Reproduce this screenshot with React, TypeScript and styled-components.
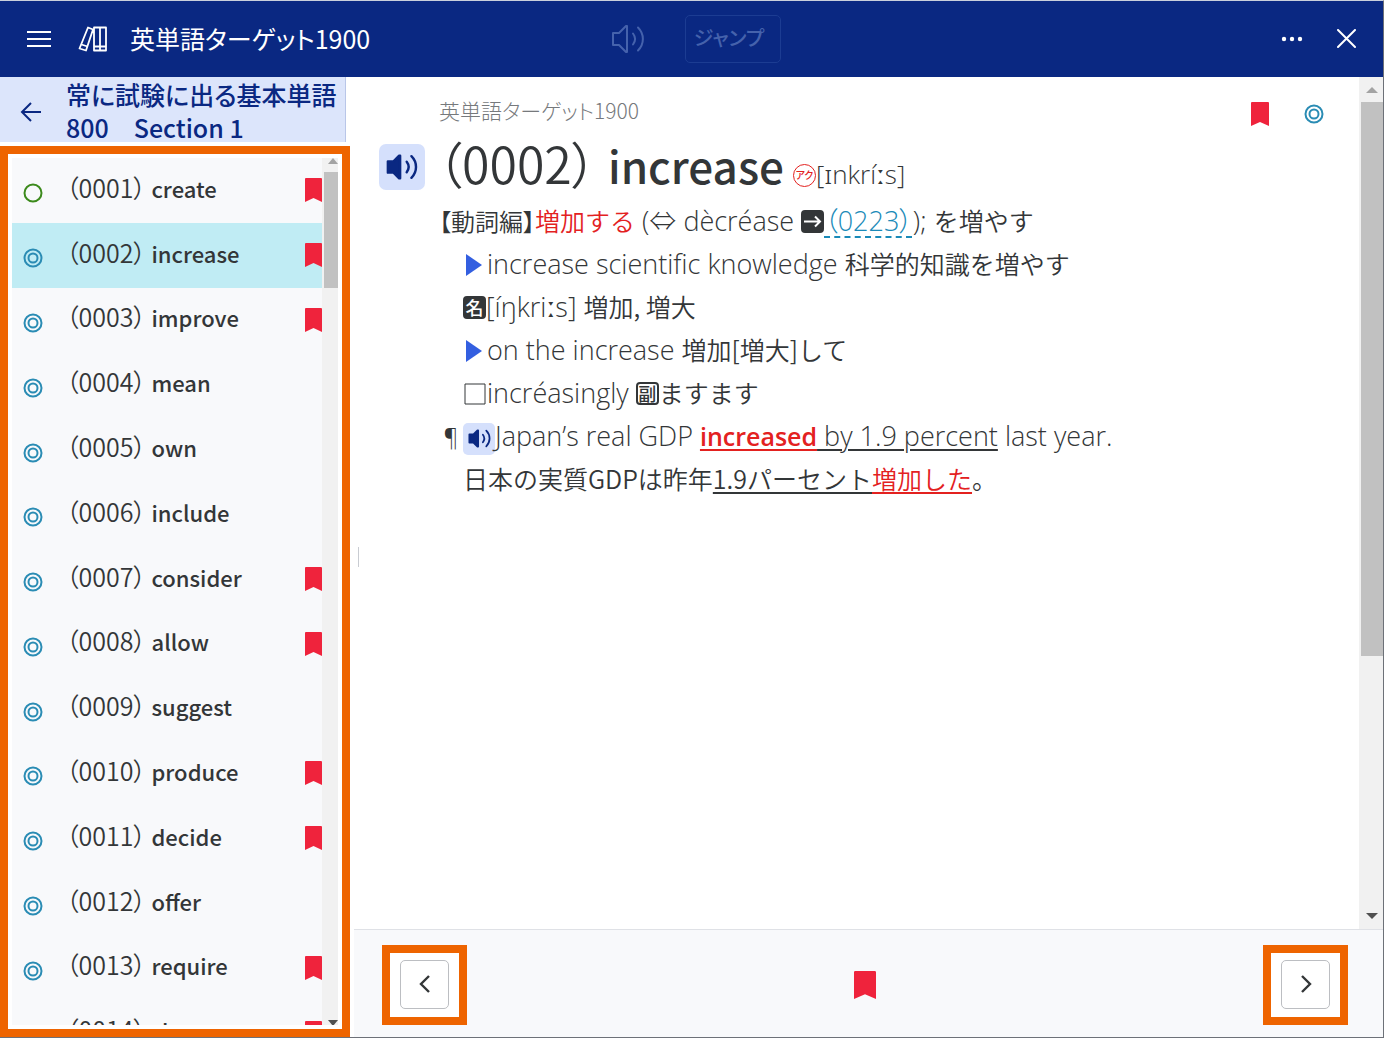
import React from "react";
import styled, { createGlobalStyle, css } from "styled-components";

const navy = "#0a2882";
const ink = "#333638";
const red = "#e3211f";
const orange = "#ee6400";
const bookmarkRed = "#ef233c";
const teal = "#2a8cb4";

const GlobalStyle = createGlobalStyle`
  *, *::before, *::after { box-sizing: border-box; }
  body {
    margin: 0;
    color: ${ink};
    background: #fff;
    font-family: "Noto Sans CJK JP", "Noto Sans", sans-serif;
    font-feature-settings: "palt";
  }
  button { font: inherit; color: inherit; padding: 0; border: 0; background: none; cursor: pointer; }
  svg { display: block; flex: none; }
`;

const Window = styled.div`
  display: flex;
  flex-direction: column;
  height: 100vh;
  border: 1px solid #6d7178;
  border-top-color: #c9cfdc;
  border-left: 0;
  overflow: hidden;
`;

const TopBar = styled.header`
  display: grid;
  grid-template-columns: 1fr auto 1fr;
  align-items: center;
  flex: none;
  height: 76px;
  padding: 0 27px 0 26px;
  color: #fff;
  background: ${navy};
`;

const BarGroup = styled.div<{ $gap: number; $end?: boolean }>`
  display: flex;
  align-items: center;
  gap: ${(p) => p.$gap}px;
  justify-content: ${(p) => (p.$end ? "flex-end" : "flex-start")};
`;

const BarTools = styled(BarGroup)`
  padding-left: 10px;
`;

const AppTitle = styled.h1`
  margin: 0 0 0 -4px;
  padding-bottom: 2px;
  font-size: 25px;
  line-height: 36px;
  font-weight: 400;
  white-space: nowrap;
`;

const JumpButton = styled.button`
  width: 96px;
  height: 48px;
  padding: 0 8px 4px 0;
  font-size: 20px;
  font-weight: 500;
  color: #4562ac;
  border: 1px solid #1c3c92;
  border-radius: 5px;
`;

const Body = styled.div`
  display: flex;
  flex: 1;
  min-height: 0;
`;

const Sidebar = styled.aside`
  display: flex;
  flex-direction: column;
  flex: none;
  width: 350px;
`;

const SectionHead = styled.div`
  display: flex;
  align-items: center;
  gap: 24px;
  height: 65px;
  margin-right: 4px;
  padding: 2px 0 0 20px;
  color: ${navy};
  background: #dce5fb;
  border-right: 1px solid #b9c6e8;
`;

const BackButton = styled.button`
  padding-top: 2px;
`;

const SectionTitle = styled.h2`
  margin: 0;
  font-size: 25px;
  line-height: 33px;
  font-weight: 500;
  white-space: nowrap;
`;

const ListFrame = styled.div`
  display: flex;
  flex: 1;
  min-height: 0;
  margin-top: 4px;
  padding: 4px;
  border: 8px solid ${orange};
`;

const WordList = styled.ul`
  display: grid;
  grid-auto-rows: 1fr;
  flex: 1;
  height: 907px;
  margin: 0;
  padding: 0;
  list-style: none;
`;

const ListClip = styled.div`
  display: flex;
  align-items: flex-start;
  flex: 1;
  overflow: hidden;
  background: #f8f9fb;
`;

const WordRow = styled.button<{ $active: boolean }>`
  display: flex;
  align-items: center;
  width: 100%;
  height: 100%;
  padding-left: 11px;
  text-align: left;
  font-size: 25px;
  line-height: 36px;
  background: ${(p) => (p.$active ? "#c0ecf4" : "transparent")};
`;

const RowMark = styled.span`
  padding-top: 6px;
`;

const RowText = styled.span`
  flex: 1;
  padding: 0 0 6px 23px;
  white-space: pre;
`;

const Number = styled.span`
  font-weight: 350;
`;

const Word = styled.span<{ $size: number }>`
  font-size: ${(p) => p.$size}px;
  font-weight: 500;
`;

const ScrollTrack = styled.div<{ $wide?: boolean }>`
  display: flex;
  flex-direction: column;
  flex: none;
  align-self: stretch;
  width: ${(p) => (p.$wide ? 24 : 16)}px;
  padding-left: 2px;
  background: #f1f1f1;
`;

const ScrollThumb = styled.div<{ $share: number }>`
  flex: ${(p) => p.$share} 0 0;
  background: #c1c1c1;
`;

const ScrollRest = styled.div<{ $share: number }>`
  flex: ${(p) => p.$share} 0 0;
`;

const ScrollArrow = styled.div<{ $height: number; $corner?: boolean }>`
  display: flex;
  justify-content: ${(p) => (p.$corner ? "flex-end" : "center")};
  align-items: ${(p) => (p.$corner ? "flex-start" : "center")};
  flex: none;
  height: ${(p) => p.$height}px;
`;

const Reader = styled.main`
  display: flex;
  flex-direction: column;
  flex: 1;
  min-width: 0;
`;

const ReaderArea = styled.div`
  display: flex;
  flex: 1;
  min-height: 0;
`;

const Splitter = styled.div`
  align-self: center;
  width: 1px;
  height: 20px;
  margin: 108px 0 0 8px;
  background: #c9ccd2;
`;

const Article = styled.article`
  flex: 1;
  min-width: 0;
  padding: 16px 35px 0 20px;
`;

const SourceRow = styled.div`
  display: flex;
  justify-content: space-between;
  align-items: center;
  height: 42px;
  padding-left: 60px;
`;

const Source = styled.span`
  padding-bottom: 8px;
  font-size: 21px;
  line-height: 30px;
  font-weight: 300;
  color: #76797c;
`;

const Headword = styled.div`
  display: flex;
  align-items: center;
  gap: 12px;
  height: 64px;
`;

const AudioButton = styled.button<{ $small?: boolean }>`
  display: inline-flex;
  align-items: center;
  justify-content: center;
  flex: none;
  color: ${navy};
  background: #d5e0fc;
  ${(p) =>
    p.$small
      ? css`
          width: 32px;
          height: 32px;
          border-radius: 5px;
          vertical-align: middle;
        `
      : css`
          width: 46px;
          height: 46px;
          border-radius: 7px;
        `}
`;

const HeadText = styled.h2`
  margin: 0;
  padding-top: 2px;
  font-size: 50px;
  line-height: 60px;
  font-weight: 400;
  white-space: nowrap;
`;

const Pronunciation = styled.span`
  font-family: "Open Sans", "Noto Sans", sans-serif;
  font-size: 26px;
  font-weight: 300;
`;

const AccentBadge = styled.span`
  display: inline-flex;
  align-items: center;
  justify-content: center;
  width: 23px;
  height: 23px;
  margin-left: 9px;
  font-size: 10px;
  line-height: 20px;
  font-weight: 500;
  vertical-align: 5px;
  color: ${red};
  border: 1px solid ${red};
  border-radius: 50%;
`;

const Line = styled.p<{ $level: number }>`
  margin: 0;
  padding-left: ${(p) => 60 + p.$level * 24}px;
  font-family: "Open Sans", "Noto Sans CJK JP", "Noto Sans", sans-serif;
  font-size: 27px;
  line-height: 43px;
  height: 43px;
  font-weight: 300;
  white-space: nowrap;
`;

const Pilcrow = styled.span`
  display: inline-block;
  width: 24px;
  padding-left: 4px;
  font-size: 24px;
`;

const Jp = styled.span<{ $red?: boolean; $tight?: boolean }>`
  color: ${(p) => (p.$red ? red : "inherit")};
  font-family: "Noto Sans CJK JP", sans-serif;
  font-size: ${(p) => (p.$tight ? 24 : 25)}px;
  font-weight: 350;
  font-feature-settings: ${(p) => (p.$tight ? '"palt"' : "normal")};
`;

const Underlined = styled.span`
  text-decoration: underline;
  text-decoration-thickness: 2px;
  text-underline-offset: 3px;
`;

const Key = styled.strong`
  color: ${red};
  font-size: 25px;
  font-weight: 600;
  text-decoration: underline;
  text-decoration-thickness: 2px;
  text-underline-offset: 3px;
`;

const RedUnder = styled(Underlined)`
  color: ${red};
`;

const CrossRef = styled.a`
  color: #1a8ab8;
  text-decoration: underline dashed 2px;
  text-underline-offset: 5px;
`;

const Tag = styled.span<{ $outline?: boolean }>`
  display: inline-block;
  overflow: hidden;
  width: 23px;
  height: 23px;
  font-family: "Noto Sans CJK JP", sans-serif;
  font-size: 18px;
  line-height: 19px;
  font-weight: 500;
  text-align: center;
  vertical-align: -2px;
  border: 2px solid ${ink};
  border-radius: 4px;
  color: ${(p) => (p.$outline ? ink : "#fff")};
  background: ${(p) => (p.$outline ? "#fff" : ink)};
`;

const Bullet = styled.svg`
  display: inline-block;
  width: 24px;
  height: 24px;
  vertical-align: -3px;
`;

const BottomBar = styled.footer`
  display: flex;
  align-items: center;
  justify-content: space-between;
  flex: none;
  height: 108px;
  margin-left: 4px;
  padding: 2px 35px 0 28px;
  background: #f8f9fb;
  border-top: 1px solid #dfe1e6;
`;

const PagerFrame = styled.div`
  padding: 7px 10px 8px;
  background: #fff;
  border: 8px solid ${orange};
`;

const PagerButton = styled.button`
  display: flex;
  align-items: center;
  justify-content: center;
  width: 49px;
  height: 49px;
  background: #fff;
  border: 1px solid #bcbec2;
  border-radius: 5px;
`;

function Bookmark({ width = 18, height = 24 }: { width?: number; height?: number }) {
  return (
    <svg width={width} height={height} viewBox="0 0 18 24" preserveAspectRatio="none">
      <path d="M1 0h16a1 1 0 0 1 1 1v23l-9-4L0 24V1a1 1 0 0 1 1-1Z" fill={bookmarkRed} />
    </svg>
  );
}

function Mark({ single }: { single?: boolean }) {
  return (
    <svg width="20" height="20" viewBox="0 0 20 20" fill="none" strokeWidth="2">
      <circle cx="10" cy="10" r="8.5" stroke={single ? "#3c8a1c" : teal} />
      {!single && <circle cx="10" cy="10" r="4.5" stroke={teal} />}
    </svg>
  );
}

function Speaker({ size, filled, color }: { size: number; filled?: boolean; color: string }) {
  return (
    <svg width={size} height={size} viewBox="0 0 34 34" fill="none" stroke={color} strokeWidth={filled ? 2.6 : 2} strokeLinecap="round" strokeLinejoin="round">
      <path d={filled ? "M2 11h6l6-6h1v24h-1l-6-6H2Z" : "M2 11h6l7-7h1v26h-1l-7-7H2Z"} fill={filled ? color : "none"} />
      <path d="M22 11.5c2.6 3.4 2.6 7.6 0 11M27 5.5c6.5 6.5 6.5 16.5 0 23" />
    </svg>
  );
}

function Arrow({ up, size }: { up?: boolean; size: number }) {
  return (
    <svg width={size} height="6" viewBox="0 0 12 6" preserveAspectRatio="none">
      <path d={up ? "M0 6 6 0l6 6Z" : "M0 0h12L6 6Z"} fill={up ? "#a3a3a3" : "#505050"} />
    </svg>
  );
}

function Triangle() {
  return (
    <Bullet viewBox="0 0 24 24">
      <path d="M3 1v22l16-11Z" fill="#335fe0" />
    </Bullet>
  );
}

const words: { word: string; saved: boolean; single?: boolean }[] = [
  { word: "create", saved: true, single: true },
  { word: "increase", saved: true },
  { word: "improve", saved: true },
  { word: "mean", saved: false },
  { word: "own", saved: false },
  { word: "include", saved: false },
  { word: "consider", saved: true },
  { word: "allow", saved: true },
  { word: "suggest", saved: false },
  { word: "produce", saved: true },
  { word: "decide", saved: true },
  { word: "offer", saved: false },
  { word: "require", saved: true },
  { word: "share", saved: true },
];

export default function App() {
  return (
    <Window>
      <GlobalStyle />
      <TopBar>
        <BarGroup $gap={27}>
          <button aria-label="メニュー">
            <svg width="25" height="20" viewBox="0 0 25 20" stroke="#fff" strokeWidth="2">
              <path d="M1 3h24M1 10h24M1 17h24" />
            </svg>
          </button>
          <svg width="29" height="26" viewBox="0 0 29 26" fill="none" stroke="#fff" strokeWidth="1.8" strokeLinejoin="round">
            <path d="M10 1.5 15 3.5 8 24.5 1.5 22.5Z M3.5 18.5l6 2M16 1.5h12v23H16ZM22 1.5v23M16 20.5h12" />
          </svg>
          <AppTitle>英単語ターゲット1900</AppTitle>
        </BarGroup>
        <BarTools $gap={40}>
          <button aria-label="音声" disabled>
            <Speaker size={34} color="#4562ac" />
          </button>
          <JumpButton disabled>ジャンプ</JumpButton>
        </BarTools>
        <BarGroup $gap={34} $end>
          <button aria-label="その他">
            <svg width="22" height="6" viewBox="0 0 22 6" fill="#fff">
              <circle cx="3" cy="3" r="2.2" />
              <circle cx="11" cy="3" r="2.2" />
              <circle cx="19" cy="3" r="2.2" />
            </svg>
          </button>
          <button aria-label="閉じる">
            <svg width="19" height="21" viewBox="0 0 19 21" stroke="#fff" strokeWidth="2" strokeLinecap="round">
              <path d="m1 1 17 17M18 1 1 18" />
            </svg>
          </button>
        </BarGroup>
      </TopBar>
      <Body>
        <Sidebar>
          <SectionHead>
            <BackButton aria-label="戻る">
              <svg width="22" height="20" viewBox="0 0 22 20" fill="none" stroke={navy} strokeWidth="2">
                <path d="M21 10H2M11 1 2 10l9 9" />
              </svg>
            </BackButton>
            <SectionTitle>
              常に試験に出る基本単語
              <br />
              800　Section 1
            </SectionTitle>
          </SectionHead>
          <ListFrame>
            <ListClip>
              <WordList>
                {words.map((w, i) => (
                  <li key={w.word}>
                    <WordRow $active={i === 1}>
                      <RowMark>
                        <Mark single={w.single} />
                      </RowMark>
                      <RowText>
                        <Number>（{String(i + 1).padStart(4, "0")}） </Number>
                        <Word $size={22}>{w.word}</Word>
                      </RowText>
                      {w.saved && <Bookmark width={17} />}
                    </WordRow>
                  </li>
                ))}
              </WordList>
              <ScrollTrack>
                <ScrollArrow $height={14} $corner>
                  <Arrow up size={10} />
                </ScrollArrow>
                <ScrollThumb $share={116} />
                <ScrollRest $share={733} />
                <ScrollArrow $height={5} $corner>
                  <Arrow size={10} />
                </ScrollArrow>
              </ScrollTrack>
            </ListClip>
          </ListFrame>
        </Sidebar>
        <Reader>
          <ReaderArea>
            <Splitter />
            <Article>
              <SourceRow>
                <Source>英単語ターゲット1900</Source>
                <BarGroup $gap={35}>
                  <Bookmark />
                  <Mark />
                </BarGroup>
              </SourceRow>
              <Headword>
                <AudioButton aria-label="発音を聞く">
                  <Speaker size={32} filled color={navy} />
                </AudioButton>
                <HeadText>
                  <Number>（0002） </Number>
                  <Word $size={44}>increase</Word>
                  <AccentBadge>アク</AccentBadge>
                  <Pronunciation>[ɪnkríːs]</Pronunciation>
                </HeadText>
              </Headword>
              <div>
                <Line $level={0}>
                  <Jp $tight>【動詞編】</Jp>
                  <Jp $red>増加する</Jp> (⇔ dècréase{" "}
                  <Tag>
                    <svg width="19" height="19" viewBox="0 0 19 19" fill="none" stroke="#fff" strokeWidth="2">
                      <path d="M1 9.5h16M12 4.5l5 5-5 5" />
                    </svg>
                  </Tag>
                  <CrossRef href="#0223">（0223）</CrossRef>); <Jp>を増やす</Jp>
                </Line>
                <Line $level={1}>
                  <Triangle />
                  increase scientific knowledge <Jp>科学的知識を増やす</Jp>
                </Line>
                <Line $level={1}>
                  <Tag>名</Tag>[íŋkriːs] <Jp>増加, 増大</Jp>
                </Line>
                <Line $level={1}>
                  <Triangle />
                  on the increase <Jp>増加[増大]して</Jp>
                </Line>
                <Line $level={1}>
                  <Bullet viewBox="0 0 24 24">
                    <path d="M2 2h20v20H2Z" fill="none" stroke={ink} />
                  </Bullet>
                  incréasingly <Tag $outline>副</Tag>
                  <Jp>ますます</Jp>
                </Line>
                <Line $level={0}>
                  <Pilcrow>¶</Pilcrow>
                  <AudioButton $small aria-label="例文を聞く">
                    <Speaker size={23} filled color={navy} />
                  </AudioButton>
                  Japan’s real GDP <Key>increased</Key>
                  <Underlined> by 1.9 percent</Underlined> last year.
                </Line>
                <Line $level={1}>
                  <Jp>
                    日本の実質GDPは昨年<Underlined>1.9パーセント</Underlined>
                    <RedUnder>増加した</RedUnder>。
                  </Jp>
                </Line>
              </div>
            </Article>
            <ScrollTrack $wide>
              <ScrollArrow $height={25}>
                <Arrow up size={12} />
              </ScrollArrow>
              <ScrollThumb $share={554} />
              <ScrollRest $share={247} />
              <ScrollArrow $height={26}>
                <Arrow size={12} />
              </ScrollArrow>
            </ScrollTrack>
          </ReaderArea>
          <BottomBar>
            <PagerFrame>
              <PagerButton aria-label="前へ">
                <svg width="12" height="20" viewBox="0 0 12 20" fill="none" stroke={ink} strokeWidth="2.4">
                  <path d="m10 2-8 8 8 8" />
                </svg>
              </PagerButton>
            </PagerFrame>
            <button aria-label="ブックマーク">
              <Bookmark width={22} height={28} />
            </button>
            <PagerFrame>
              <PagerButton aria-label="次へ">
                <svg width="12" height="20" viewBox="0 0 12 20" fill="none" stroke={ink} strokeWidth="2.4">
                  <path d="m2 2 8 8-8 8" />
                </svg>
              </PagerButton>
            </PagerFrame>
          </BottomBar>
        </Reader>
      </Body>
    </Window>
  );
}
